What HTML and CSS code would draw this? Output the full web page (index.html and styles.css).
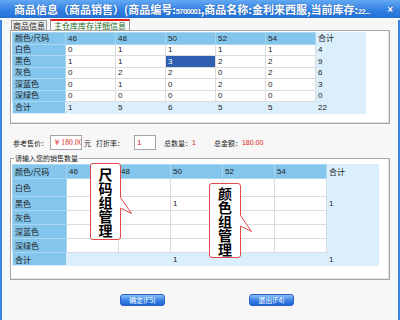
FILE: index.html
```html
<!DOCTYPE html>
<html lang="zh">
<head>
  <meta charset="UTF-8">
  <title>商品信息</title>
  <link rel="stylesheet" href="styles.css">
</head>
<body>
  <div class="window">
    <div class="titlebar">
      <span class="title">商品信息（商品销售）(商品编号:<span class="num">5700001</span>,商品名称:金利来西服,当前库存:<span class="num">22...</span></span>
      <span class="close">×</span>
    </div>

    <div class="frame">
      <div class="tabs">
        <span class="tab">商品信息</span>
        <span class="tab active">主仓库库存详细信息</span>
      </div>

      <div class="panel">
        <table class="grid stock">
          <tr class="head"><td>颜色/尺码</td><td>46</td><td>48</td><td>50</td><td>52</td><td>54</td><td class="sum">合计</td></tr>
          <tr><td>白色</td><td>0</td><td>1</td><td>1</td><td>1</td><td>1</td><td class="sum">4</td></tr>
          <tr><td>黑色</td><td>1</td><td>1</td><td class="selected">3</td><td>2</td><td>2</td><td class="sum">9</td></tr>
          <tr><td>灰色</td><td>0</td><td>2</td><td>2</td><td>0</td><td>2</td><td class="sum">6</td></tr>
          <tr><td>深蓝色</td><td>0</td><td>1</td><td>0</td><td>2</td><td>0</td><td class="sum">3</td></tr>
          <tr><td>深绿色</td><td>0</td><td>0</td><td>0</td><td>0</td><td>0</td><td class="sum">0</td></tr>
          <tr class="total"><td>合计</td><td>1</td><td>5</td><td>6</td><td>5</td><td>5</td><td>22</td></tr>
        </table>
      </div>

      <div class="price-row">
        <span>参考售价：</span>
        <span class="field price">￥180.00</span>
        <span class="unit">元</span>
        <span class="discount-label">打折率：</span>
        <span class="field rate">1</span>
        <span class="qty-label">总数量：</span><span class="red">1</span>
        <span class="amount-label">总金额：</span><span class="red">180.00</span>
      </div>

      <fieldset class="group">
        <legend>请输入您的销售数量</legend>
        <table class="grid sale">
          <tr class="head"><td>颜色/尺码</td><td>46</td><td>48</td><td>50</td><td>52</td><td>54</td><td class="sum">合计</td></tr>
          <tr class="tall"><td>白色</td><td></td><td></td><td></td><td></td><td></td><td class="sum"></td></tr>
          <tr><td>黑色</td><td></td><td></td><td>1</td><td></td><td></td><td class="sum">1</td></tr>
          <tr><td>灰色</td><td></td><td></td><td></td><td></td><td></td><td class="sum"></td></tr>
          <tr><td>深蓝色</td><td></td><td></td><td></td><td></td><td></td><td class="sum"></td></tr>
          <tr><td>深绿色</td><td></td><td></td><td></td><td></td><td></td><td class="sum"></td></tr>
          <tr class="total"><td>合计</td><td></td><td></td><td>1</td><td></td><td></td><td>1</td></tr>
        </table>
      </fieldset>

      <div class="actions">
        <button>确定(F5)</button>
        <button>退出(F4)</button>
      </div>
    </div>

    <!-- 提示框 -->
    <div class="callout size-tip">
      <div class="tip-text">尺码组管理</div>
      <svg class="tail" width="13" height="18" viewBox="0 0 13 18"><path class="tail-fill" d="M0 0 L11.5 16.5 L0 11 Z"/><path class="tail-line" d="M0.5 0.5 L11.5 16.5 L0.5 11"/></svg>
    </div>
    <div class="callout color-tip">
      <div class="tip-text">颜色组管理</div>
      <svg class="tail" width="13" height="18" viewBox="0 0 13 18"><path class="tail-fill" d="M0 0 L11.5 16.5 L0 11 Z"/><path class="tail-line" d="M0.5 0.5 L11.5 16.5 L0.5 11"/></svg>
    </div>
  </div>
</body>
</html>
```

FILE: styles.css
```css
body { margin:0; padding:0; font-family:"Liberation Sans", "Noto Sans CJK SC", sans-serif; }
.window {
  position: relative;
  width: 400px;
  height: 320px;
  background: #f7f7f7;
  overflow: hidden;
}
.titlebar {
  height: 18px;
  display: flex;
  justify-content: space-between;
  align-items: center;
  padding: 0 7px 0 14px;
  background: linear-gradient(#62a8f4, #2f7ee0 60%, #2470d8);
  color: white;
  font-family: "Noto Sans CJK SC", sans-serif;
  font-size: 11px;
  font-weight: bold;
  white-space: nowrap;
  overflow: hidden;
  text-shadow: 0 0 1px #1d4f9c;
}
.title .num { font-family:"Liberation Sans", sans-serif; font-size:7.5px; letter-spacing:-0.6px; }
.close { font-size: 10px; font-family:"Liberation Sans", sans-serif; }
.frame {
  height: 302px;
  box-sizing: border-box;
  border: 2px solid #3b86e2;
  border-top: none;
}
.tabs {
  display: flex;
  align-items: flex-end;
  height: 10px;
  margin-top: 2px;
  padding-left: 9px;
  gap: 3px;
  font-size: 8px;
  font-family: "Noto Sans CJK SC", sans-serif;
}
.tab {
  height: 9px;
  line-height: 9px;
  padding: 0 1px;
  border: 1px solid #9a9a9a;
  border-bottom: none;
  background: #ececec;
  color: #222;
}
.tab.active {
  height: 9px;
  border-top: 2px solid #e02020;
  background: #fafafa;
  color: #1c6a1c;
  padding: 0 3px;
}
.panel {
  height: 94px;
  box-sizing: border-box;
  margin: 0 8px;
  padding: 1px;
  background: white;
  border: 1px solid #a8a8a8;
  box-shadow: inset -1px -1px 0 #dedede;
}
.grid {
  border-collapse: collapse;
  table-layout: fixed;
  font-size: 8px;
  color: #222;
}
.grid td {
  border: 1px solid #dcdcdc;
  padding: 0 2px;
  white-space: nowrap;
  overflow: hidden;
  background: white;
  font-family: "Liberation Sans", "Noto Sans CJK SC", sans-serif;
}
.grid td:first-child { background: #84c5eb; border-color: #a9d6f0; }
.grid .head td { background: #84c5eb; border-color: #a9d6f0; }
.grid td.sum, .grid .total td { background: #dbeefc; border-color: #dbeefc; }
.grid .total td:first-child { background: #84c5eb; }
.grid td.selected { background: #2e5fb0; color: white; }
.stock { width: 353px; }
.stock td { height: 10.5px; line-height: 9px; width: 45px; }
.stock td:first-child { width: 48px; }
.sale { width: 366px; }
.sale td { height: 13px; width: 47px; }
.sale td:first-child { width: 49px; }
.sale .head td { height: 13px; vertical-align: middle; }
.sale .tall td { height: 17px; }
.sale .total td { height: 12px; }
.price-row {
  display: flex;
  align-items: center;
  height: 15px;
  margin-top: 11px;
  padding-left: 11px;
  font-size: 7px;
  font-family: "Noto Sans CJK SC", sans-serif;
  color: #222;
  white-space: nowrap;
}
.field {
  height: 15px;
  box-sizing: border-box;
  margin-left: 2px;
  padding-left: 2px;
  border: 1px solid #a5a5a5;
  background: white;
  color: #e01818;
  line-height: 13px;
  font-size: 7.5px;
  letter-spacing: 0.2px;
  font-family: "Liberation Serif", serif;
  overflow: hidden;
}
.price { width: 32px; }
.rate { width: 22px; margin-left: 10px; font-family:"Liberation Sans", sans-serif; font-size: 8px; }
.unit { margin-left: 2px; }
.discount-label { margin-left: 5px; }
.qty-label { margin-left: 8px; }
.amount-label { margin-left: 18px; }
.red { color: #e01818; font-family:"Liberation Sans", sans-serif; }
.group {
  margin: 4px 8px 0;
  padding: 1px 1px 13px;
  border: 1px solid #a8a8a8;
  box-shadow: inset -1px -1px 0 #dedede;
  background: white;
  min-width: 0;
}
.group legend {
  padding: 0 1px;
  margin-left: 2px;
  font-size: 7px;
  line-height: 9px;
  font-family: "Noto Sans CJK SC", sans-serif;
  color: #222;
  background: #f7f7f7;
}
.actions {
  display: flex;
  gap: 84px;
  margin-top: 14px;
  padding-left: 118px;
}
.actions button {
  width: 45px;
  height: 12px;
  padding: 0;
  border: 1px solid #2a5fc4;
  border-radius: 3px;
  background: linear-gradient(#8cc0f6, #3d86e6 50%, #1f64d4);
  color: white;
  font-size: 7px;
  font-family: "Noto Sans CJK SC", sans-serif;
  line-height: 10px;
}
.callout {
  position: absolute;
  box-sizing: border-box;
  background: white;
  border: 1px solid #e24a4a;
  border-radius: 3px;
}
.size-tip { left: 90px; top: 163px; width: 31px; height: 77px; padding-top: 3px; }
.color-tip { left: 209px; top: 183px; width: 32px; height: 75px; padding-top: 2px; }
.tip-text {
  width: 14px;
  margin: 0 auto;
  font-size: 14px;
  line-height: 14px;
  font-weight: bold;
  color: black;
  font-family: "Noto Sans CJK SC", sans-serif;
}
.tail { position: absolute; left: calc(100% - 0.5px); }
.size-tip .tail { top: 33px; }
.color-tip .tail { top: 31px; }
.tail-fill { fill: white; }
.tail-line { fill: none; stroke: #e24a4a; stroke-width: 1; }
```
